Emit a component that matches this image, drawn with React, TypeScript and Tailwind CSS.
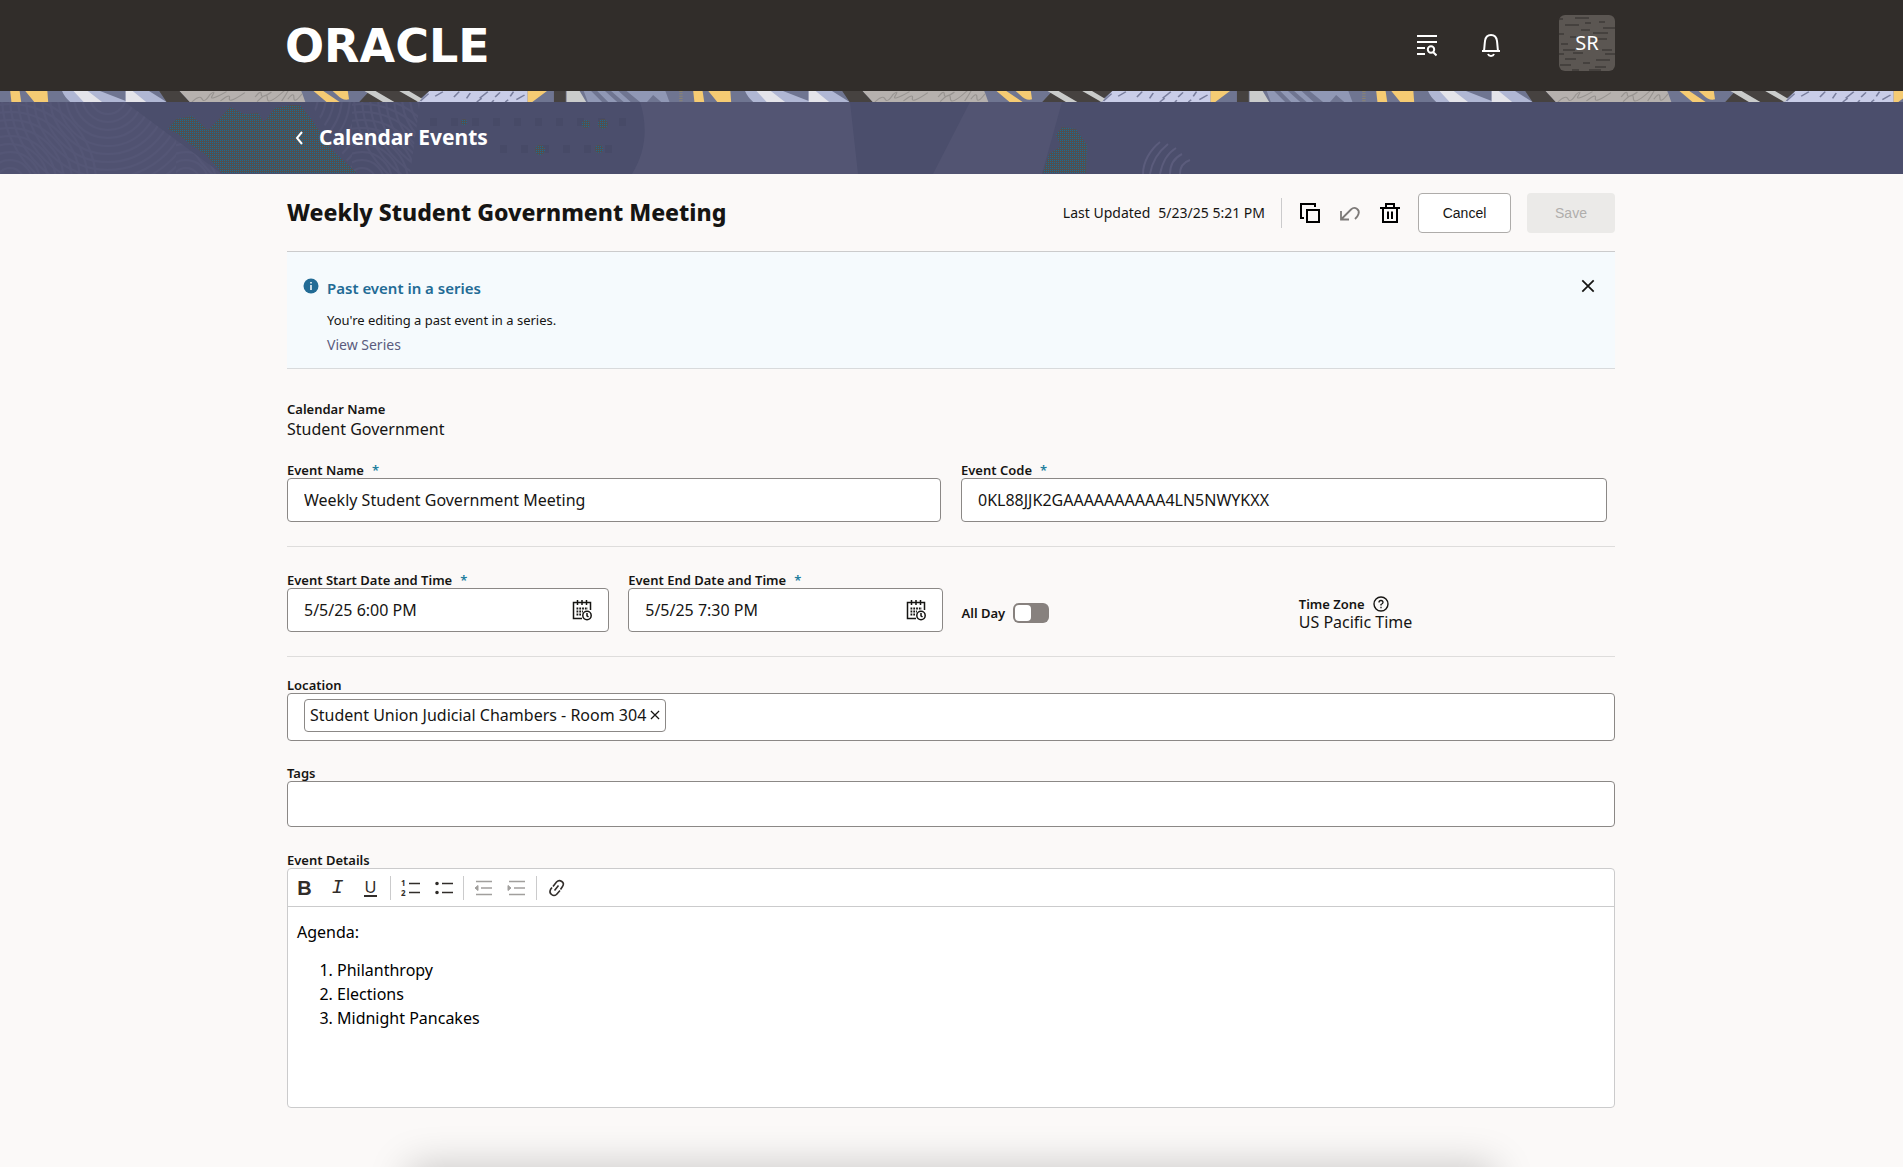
import React, { useState } from 'react';

interface FieldLabelProps {
  htmlFor: string;
  text: string;
  required?: boolean;
}

const FieldLabel: React.FC<FieldLabelProps> = ({ htmlFor, text, required }) => (
  <label htmlFor={htmlFor} className="block text-[13px] leading-4 font-semibold whitespace-nowrap">
    {text}
    {required && <span className="ml-2 text-[#227e9e]">*</span>}
  </label>
);

const CalendarClockIcon = () => (
  <svg width="24" height="24" viewBox="0 0 24 24" fill="none" stroke="currentColor" strokeWidth="1.5">
    <path d="M12 20.5H3.5V4.500H20.500V12M7.500 2V7M12 2V7M16.500 2V7" />
    <path d="M6.500 10.500H18M6.500 13.500H13M6.500 16.500H11" strokeWidth="2" strokeDasharray="1.800 1" />
    <circle cx="17" cy="17.500" r="4.200" />
    <path d="M17 15V17.800L18.500 19" />
  </svg>
);

const CopyIcon = () => (
  <svg width="24" height="24" viewBox="0 0 24 24" fill="none" stroke="currentColor" strokeWidth="2">
    <path d="M6 17H3V3H17V6" />
    <path d="M9 9H21V21H9Z" />
  </svg>
);

const UndoIcon = () => (
  <svg width="24" height="24" viewBox="0 0 24 24" fill="none" stroke="currentColor" strokeWidth="1.8">
    <path d="M3 10V18.500H11M3 18.500L13 8.500C17 4.500 22 9 20.500 13C20 15 18.500 16.500 17 18" />
  </svg>
);

const TrashIcon = () => (
  <svg width="24" height="24" viewBox="0 0 24 24" fill="none" stroke="currentColor" strokeWidth="2">
    <path d="M2 7H22M8 7V3H16V7M5 7V21H19V7M10 10.500V18M14 10.500V18" />
  </svg>
);

const CloseIcon = ({ size }: { size: number }) => (
  <svg width={size} height={size} viewBox="0 0 16 16" fill="none" stroke="currentColor" strokeWidth="2">
    <path d="M1.500 1.500L14.500 14.500M14.500 1.500L1.500 14.500" />
  </svg>
);

// Decorative strip under the global header, one tile every 683px
const PatternStrip = () => (
  <svg className="block h-[11px] w-full bg-[#6f7591]" aria-hidden="true">
    <defs>
      <pattern id="strip" width="683" height="11" patternUnits="userSpaceOnUse">
        <g transform="scale(0.4082 0.3334)">
          <path fill="#f5cb73" d="M25 0H48L52 33H28ZM62 0H116L118 33H84ZM768 0H792L832 33H800ZM815 0H852L855 25Q840 30 826 12ZM1292 0H1340L1304 33H1292Z" />
          <path fill="#b0b7d4" d="M152 0H245L308 30V0H365L408 33H172Q158 18 152 0Z" />
          <path fill="#e4e4ea" d="M180 0H215L250 33H205ZM308 0H325L358 33H308Z" />
          <path fill="#464240" d="M390 0H440L465 33H408ZM905 0H1052L1020 33H880ZM1357 0H1386V33H1357Z" />
          <path fill="#b6b1ae" d="M440 0H738L748 33H465Z" />
          <path fill="none" stroke="#989491" strokeWidth="3" d="M470 33Q490 10 495 24T515 10Q530 -5 520 14T555 2M540 30Q565 5 562 22T600 5M625 18Q640 -5 640 10T665 3M630 32Q655 0 655 22T690 6T690 30M705 25Q720 0 720 20T740 8" />
          <path fill="#cacccb" d="M893 0H920L966 33H938ZM978 0H1002L1035 24L1025 33ZM1388 0H1420L1436 33H1388Z" />
          <path fill="#c9cde8" d="M1052 0H1292V33H1026Z" />
          <path fill="none" stroke="#797e9d" strokeWidth="4" d="M1050 8L1030 30M1085 2L1066 16M1125 2L1112 18M1152 6L1143 22M1195 2L1175 22M1225 4L1213 18M1258 2L1250 16M1180 22L1168 33M1210 28L1205 33M1285 12L1265 26M1245 26L1238 33" />
          <path fill="#9098b5" d="M1430 0H1448L1475 33H1440ZM1463 0H1482L1512 33H1490ZM1497 0H1515L1545 33H1528ZM1535 0H1630L1640 33H1620L1600 12L1585 33H1568Z" />
          <path fill="none" stroke="#8c8470" strokeWidth="8" strokeDasharray="3 4" d="M1668 0V33" />
        </g>
      </pattern>
    </defs>
    <rect width="100%" height="11" fill="url(#strip)" />
  </svg>
);

const BannerArt = () => (
  <svg className="absolute inset-0 h-full w-full" viewBox="0 0 1903 72" preserveAspectRatio="xMinYMin slice" aria-hidden="true">
    <defs>
      <pattern id="weave" width="2" height="2" patternUnits="userSpaceOnUse">
        <rect width="2" height="2" fill="#514f50" />
        <rect width="1" height="1" fill="#1c6b94" />
      </pattern>
      <pattern id="rings" width="176" height="72" patternUnits="userSpaceOnUse">
        <g fill="none" stroke="#595a7a" strokeWidth="2">
          {[14, 22, 30, 38, 46, 54, 62, 70, 78, 86].map((r) => (
            <circle key={r} cx="10" cy="80" r={r} />
          ))}
          {[18, 26, 34, 42, 50, 58, 66, 74, 82, 90, 98, 106].map((r) => (
            <circle key={r} cx="108" cy="-6" r={r} />
          ))}
        </g>
      </pattern>
    </defs>
    <rect width="1903" height="72" fill="#4b4e6c" />
    <path d="M0 0H125L222 72H0Z" fill="#505271" />
    <path d="M0 0H125L222 72H0Z" fill="url(#rings)" opacity="0.5" />
    <path d="M310 0H420L410 72H355Z" fill="url(#rings)" opacity="0.5" />
    <path d="M640 0H850L858 72H632C646 50 648 24 640 0Z" fill="#535573" />
    <path d="M970 0H1062L1042 72H933Z" fill="#525472" />
    <path d="M1143 72C1143 60 1150 48 1160 40M1150 72C1152 60 1158 50 1168 42M1160 72C1162 62 1166 52 1176 46M1170 72C1170 62 1174 56 1182 52M1180 72C1180 64 1184 60 1190 58" fill="none" stroke="#5b5c7c" strokeWidth="2" />
    <path d="M168 27L176 17L192 14L208 28L220 16L230 5L244 12L258 11L264 20L275 6L290 3L300 3L312 18L332 48L357 71H222L205 52L190 42L178 32Z" fill="url(#weave)" />
    <path d="M1062 25L1076 27L1087 43L1086 71H1043L1049 52L1061 44L1056 33Z" fill="url(#weave)" />
    <path d="M430 20H630M500 47H620" stroke="#444764" strokeWidth="8" strokeDasharray="7 14" opacity="0.5" />
    <g fill="url(#weave)">
      <circle cx="464" cy="20" r="3" />
      <circle cx="586" cy="22" r="4" />
      <circle cx="603" cy="22" r="5" />
      <circle cx="540" cy="48" r="5" />
      <circle cx="599" cy="47" r="4" />
    </g>
  </svg>
);

const GlobalHeader = () => (
  <header className="flex h-[91px] items-center bg-[#312d2a] pr-72 pl-[285px] text-white">
    <a href="#home" className="mr-auto font-['DejaVu_Sans'] text-[46px] leading-none font-bold">
      ORACLE
    </a>
    <button aria-label="Search list" className="mr-11 mb-[2px]">
      <svg width="20" height="24" viewBox="0 0 20 24" fill="none" stroke="currentColor" strokeWidth="2">
        <path d="M0 3H20M0 9H20M0 15H8M0 21H8" />
        <circle cx="14" cy="16.500" r="3.200" />
        <path d="M16 19L19.500 22.500" />
      </svg>
    </button>
    <button aria-label="Notifications" className="mr-[58px] mb-[2px]">
      <svg width="20" height="24" viewBox="0 0 20 24" fill="none" stroke="currentColor" strokeWidth="2">
        <path d="M1 18H19M3 18C3.500 14 3.500 12 4 8C4.500 4 7 2 10 2S15.500 4 16 8C16.500 12 16.500 14 17 18M7 21C8 23.500 12 23.500 13 21" />
      </svg>
    </button>
    <button className="relative mb-[6px] flex size-14 items-center justify-center overflow-hidden rounded-md bg-[#5b5652] text-xl">
      <svg className="absolute inset-0" width="56" height="56" fill="none" stroke="#312d2a" aria-hidden="true">
        <path d="M16 3H30M0 4H4M40 7H46M26 8H32M6 10H20M22 15H31M34 18H49M44 13H56M0 19H5M11 22H17M37 24H48M2 29H9M43 35H53M4 35H16M14 38H24M0 39H5M46 39H56M6 44H17M37 45H51M24 48H31M1 50H12M36 52H47M13 55H20M30 55H42" />
      </svg>
      <span className="relative">SR</span>
    </button>
  </header>
);

const TitleBar = () => (
  <div className="flex h-[78px] items-center gap-4 border-b border-[#cbcbcc]">
    <h1 className="mr-auto text-[23px] font-extrabold whitespace-nowrap">Weekly Student Government Meeting</h1>
    <p className="flex gap-2 text-sm whitespace-nowrap">
      <span>Last Updated</span>
      <span>5/23/25 5:21 PM</span>
    </p>
    <div className="h-[30px] w-px bg-[#cbcbcc]" />
    <button aria-label="Duplicate" className="text-black">
      <CopyIcon />
    </button>
    <button aria-label="Undo" disabled className="text-[#7d7a78]">
      <UndoIcon />
    </button>
    <button aria-label="Delete" className="text-black">
      <TrashIcon />
    </button>
    <button className="h-10 w-[93px] rounded border border-[#aeacaa] bg-white font-['Liberation_Sans'] text-sm">Cancel</button>
    <button disabled className="h-10 w-[88px] rounded bg-[#ebeae8] font-['Liberation_Sans'] text-sm text-[#b0aeac]">
      Save
    </button>
  </div>
);

const SeriesNotice = ({ onClose }: { onClose: () => void }) => (
  <section className="flex items-start border-b border-[#d8dadc] bg-[#f5fafd] pt-6 pr-5 pb-[11px] pl-4">
    <svg className="mt-[2px] mr-2 shrink-0" width="16" height="16" viewBox="0 0 16 16" aria-hidden="true">
      <circle cx="8" cy="8" r="7.500" fill="#226b95" />
      <path d="M8 4V5.500M8 7V12" stroke="#fff" strokeWidth="1.500" />
    </svg>
    <div className="mr-auto text-[13px] leading-[25px]">
      <h2 className="mb-2 text-[15px] leading-6 font-semibold text-[#226b95]">Past event in a series</h2>
      <p>You're editing a past event in a series.</p>
      <a href="#series" className="block w-fit text-sm leading-6 text-[#5b5c7e]">
        View Series
      </a>
    </div>
    <button aria-label="Close" onClick={onClose} className="mt-[3px]">
      <CloseIcon size={14} />
    </button>
  </section>
);

interface DateFieldProps {
  id: string;
  label: string;
  value: string;
}

const DateField: React.FC<DateFieldProps> = ({ id, label, value }) => (
  <div>
    <FieldLabel htmlFor={id} text={label} required />
    <div className="flex h-11 items-center rounded border border-[#8b8886] bg-white pr-[14px] pl-4">
      <input id={id} defaultValue={value} className="min-w-0 flex-1 outline-none" />
      <button type="button" aria-label={`Select ${label}`}>
        <CalendarClockIcon />
      </button>
    </div>
  </div>
);

const ToolbarDivider = () => <div className="mx-[3px] h-6 w-px bg-[#cbcbcc]" />;

const EditorToolbar = () => (
  <div className="flex h-[38px] items-center border-b border-[#cbcbcc] text-[#312d2a] [&>button]:flex [&>button]:w-[33px] [&>button]:justify-center">
    <button type="button" aria-label="Bold" className="font-['Liberation_Sans'] text-xl font-bold">
      B
    </button>
    <button type="button" aria-label="Italic" className="font-['Liberation_Mono'] text-xl italic">
      I
    </button>
    <button type="button" aria-label="Underline">
      <span className="border-b-2 px-px font-['Inter'] text-base leading-4">U</span>
    </button>
    <ToolbarDivider />
    <button type="button" aria-label="Numbered list">
      <svg width="20" height="20" viewBox="0 0 20 20" stroke="currentColor" strokeWidth="1.600">
        <path d="M8 5.500H19M8 14.500H19" />
        <text x="0" y="8" fontSize="8" fontWeight="700" stroke="none" fill="currentColor">1</text>
        <text x="0" y="18" fontSize="8" fontWeight="700" stroke="none" fill="currentColor">2</text>
      </svg>
    </button>
    <button type="button" aria-label="Bulleted list">
      <svg width="20" height="20" viewBox="0 0 20 20" stroke="currentColor" strokeWidth="1.600">
        <path d="M8 5.500H19M8 14.500H19" />
        <circle cx="3" cy="5.500" r="1" />
        <circle cx="3" cy="14.500" r="1" />
      </svg>
    </button>
    <ToolbarDivider />
    <button type="button" aria-label="Decrease indent" disabled className="text-[#a19f9d]">
      <svg width="20" height="20" viewBox="0 0 20 20" stroke="currentColor" strokeWidth="1.600">
        <path d="M2 3.500H18M7 10H18M2 16.500H18" />
        <path d="M1 10L4 7.500V12.500Z" fill="currentColor" strokeWidth="1" />
      </svg>
    </button>
    <button type="button" aria-label="Increase indent" disabled className="text-[#a19f9d]">
      <svg width="20" height="20" viewBox="0 0 20 20" stroke="currentColor" strokeWidth="1.600">
        <path d="M2 3.500H18M7 10H18M2 16.500H18" />
        <path d="M4 10L1 7.500V12.500Z" fill="currentColor" strokeWidth="1" />
      </svg>
    </button>
    <ToolbarDivider />
    <button type="button" aria-label="Insert link">
      <svg width="20" height="20" viewBox="0 0 20 20" fill="none" stroke="currentColor" strokeWidth="1.600">
        <path d="M6 8.500L9.500 4Q12 1.500 14.800 3.500T15.500 8.500L13.500 11.500M13 12.500L9.500 16.500Q7 18.500 4.500 16.500T3.500 11.500L5 9.500M7.500 12.500L11.500 7.500" />
      </svg>
    </button>
  </div>
);

export default function App() {
  const [showNotice, setShowNotice] = useState(true);

  return (
    <div className="relative flex min-h-screen flex-col overflow-hidden bg-[#fbf9f8] font-['Noto_Sans',sans-serif] text-base text-[#161513]">
      <GlobalHeader />
      <PatternStrip />
      <nav className="relative h-[72px] bg-[#4b4e6c]">
        <BannerArt />
        <a href="#calendar" className="relative flex h-full items-center gap-4 pl-[295px] text-[21px] font-bold text-white">
          <svg width="8" height="14" viewBox="0 0 8 14" fill="none" stroke="currentColor" strokeWidth="2" aria-hidden="true">
            <path d="M7 1L2 7L7 13" />
          </svg>
          Calendar Events
        </a>
      </nav>

      <main className="pr-72 pb-12 pl-[287px]">
        <TitleBar />
        {showNotice && <SeriesNotice onClose={() => setShowNotice(false)} />}

        <form>
          <dl className="mt-8">
            <dt className="text-[13px] leading-4 font-semibold">Calendar Name</dt>
            <dd className="leading-6">Student Government</dd>
          </dl>

          <div className="mt-[21px] grid grid-cols-2 gap-5 border-b border-[#dedddc] pb-6">
            <div>
              <FieldLabel htmlFor="name" text="Event Name" required />
              <input id="name" defaultValue="Weekly Student Government Meeting" className="h-11 w-full rounded border border-[#8b8886] bg-white px-4" />
            </div>
            <div className="pr-2">
              <FieldLabel htmlFor="code" text="Event Code" required />
              <input id="code" defaultValue="0KL88JJK2GAAAAAAAAAA4LN5NWYKXX" className="h-11 w-full rounded border border-[#8b8886] bg-white px-4" />
            </div>
          </div>

          <div className="grid grid-cols-[322fr_314fr_318fr_316fr] gap-x-[19px] border-b border-[#dedddc] pt-[25px] pb-6">
            <DateField id="start" label="Event Start Date and Time" value="5/5/25 6:00 PM" />
            <DateField id="end" label="Event End Date and Time" value="5/5/25 7:30 PM" />
            <div className="flex items-center gap-2 self-end pb-[9px]">
              <FieldLabel htmlFor="all-day" text="All Day" />
              <input
                id="all-day"
                type="checkbox"
                className="flex h-5 w-9 appearance-none items-center rounded-md bg-[#87817e] px-[2px] before:size-4 before:rounded before:bg-white before:content-[''] checked:justify-end"
              />
            </div>
            <dl className="self-end">
              <dt className="flex items-center gap-2 text-[13px] leading-4 font-semibold">
                Time Zone
                <svg width="16" height="16" viewBox="0 0 16 16" fill="none" stroke="currentColor" aria-hidden="true">
                  <circle cx="8" cy="8" r="7" strokeWidth="1.400" />
                  <path d="M6 6.500Q6 4.500 8 4.500T10 6.500Q10 7.500 8 8.500V9.500M8 10.800V12.200" strokeWidth="1.300" />
                </svg>
              </dt>
              <dd className="leading-5">US Pacific Time</dd>
            </dl>
          </div>

          <div className="mt-5">
            <FieldLabel htmlFor="location" text="Location" />
            <div className="flex h-12 items-center rounded border border-[#8b8886] bg-white px-4">
              <span className="mb-1 flex h-[33px] items-center gap-1 rounded border border-[#8b8886] px-[5px] whitespace-nowrap">
                Student Union Judicial Chambers - Room 304
                <button type="button" aria-label="Remove location">
                  <CloseIcon size={10} />
                </button>
              </span>
              <input id="location" className="min-w-0 flex-1 outline-none" />
            </div>
          </div>

          <div className="mt-6">
            <FieldLabel htmlFor="tags" text="Tags" />
            <input id="tags" className="h-[46px] w-full rounded border border-[#8b8886] bg-white px-4" />
          </div>

          <div className="mt-[25px]">
            <p id="details-label" className="text-[13px] leading-4 font-semibold">
              Event Details
            </p>
            <div className="min-h-60 rounded-sm border border-[#cbcbcc] bg-white">
              <EditorToolbar />
              <div
                role="textbox"
                aria-labelledby="details-label"
                contentEditable
                suppressContentEditableWarning
                className="px-[9px] pt-[13px] text-black outline-none"
              >
                <p>Agenda:</p>
                <ol className="mt-[14px] list-decimal pl-10">
                  <li>Philanthropy</li>
                  <li>Elections</li>
                  <li>Midnight Pancakes</li>
                </ol>
              </div>
            </div>
          </div>
        </form>
      </main>

      {/* footer card sits just below the fold, only its shadow shows */}
      <div className="mx-auto mt-auto -mb-10 h-10 w-[57%] shrink-0 shadow-[0_0_40px_rgba(0,0,0,0.22)]" />
    </div>
  );
}
